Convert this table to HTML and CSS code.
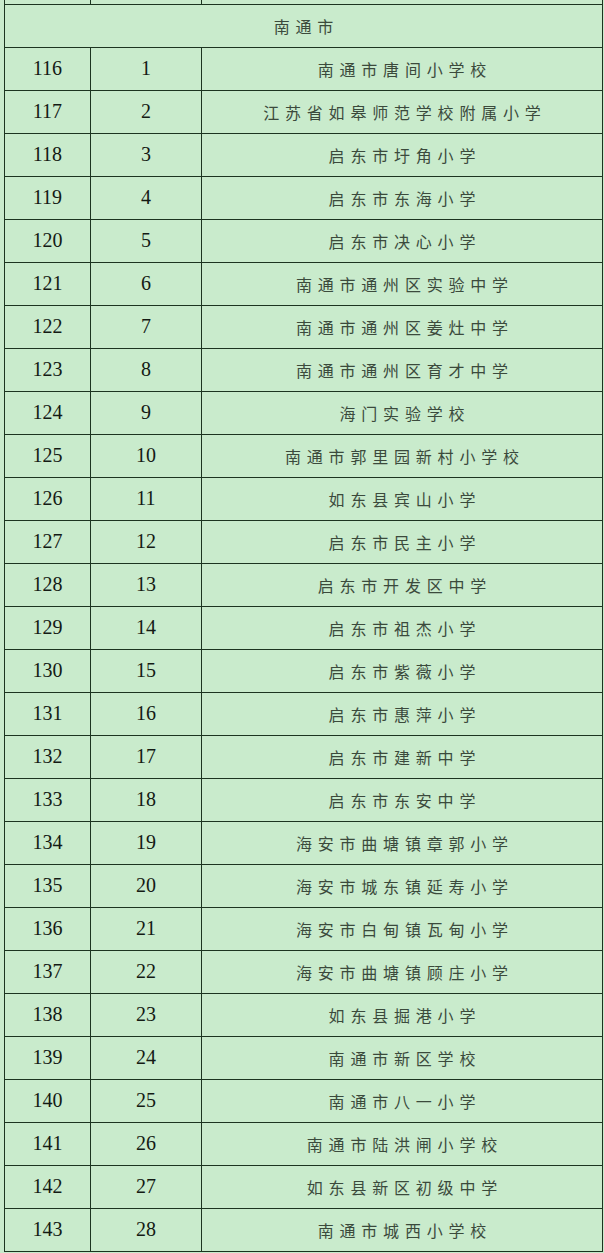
FILE: index.html
```html
<!DOCTYPE html>
<html lang="zh">
<head>
<meta charset="utf-8">
<title>南通市</title>
<link rel="stylesheet" href="styles.css">
</head>
<body>
<table class="list">
  <colgroup><col class="c1"><col class="c2"><col class="c3"></colgroup>
  <tr class="cut"><td></td><td></td><td></td></tr>
  <tr class="head"><td colspan="3" class="name">南通市</td></tr>
  <tr><td class="num">116</td><td class="num">1</td><td class="name">南通市唐间小学校</td></tr>
  <tr><td class="num">117</td><td class="num">2</td><td class="name">江苏省如皋师范学校附属小学</td></tr>
  <tr><td class="num">118</td><td class="num">3</td><td class="name">启东市圩角小学</td></tr>
  <tr><td class="num">119</td><td class="num">4</td><td class="name">启东市东海小学</td></tr>
  <tr><td class="num">120</td><td class="num">5</td><td class="name">启东市决心小学</td></tr>
  <tr><td class="num">121</td><td class="num">6</td><td class="name">南通市通州区实验中学</td></tr>
  <tr><td class="num">122</td><td class="num">7</td><td class="name">南通市通州区姜灶中学</td></tr>
  <tr><td class="num">123</td><td class="num">8</td><td class="name">南通市通州区育才中学</td></tr>
  <tr><td class="num">124</td><td class="num">9</td><td class="name">海门实验学校</td></tr>
  <tr><td class="num">125</td><td class="num">10</td><td class="name">南通市郭里园新村小学校</td></tr>
  <tr><td class="num">126</td><td class="num">11</td><td class="name">如东县宾山小学</td></tr>
  <tr><td class="num">127</td><td class="num">12</td><td class="name">启东市民主小学</td></tr>
  <tr><td class="num">128</td><td class="num">13</td><td class="name">启东市开发区中学</td></tr>
  <tr><td class="num">129</td><td class="num">14</td><td class="name">启东市祖杰小学</td></tr>
  <tr><td class="num">130</td><td class="num">15</td><td class="name">启东市紫薇小学</td></tr>
  <tr><td class="num">131</td><td class="num">16</td><td class="name">启东市惠萍小学</td></tr>
  <tr><td class="num">132</td><td class="num">17</td><td class="name">启东市建新中学</td></tr>
  <tr><td class="num">133</td><td class="num">18</td><td class="name">启东市东安中学</td></tr>
  <tr><td class="num">134</td><td class="num">19</td><td class="name">海安市曲塘镇章郭小学</td></tr>
  <tr><td class="num">135</td><td class="num">20</td><td class="name">海安市城东镇延寿小学</td></tr>
  <tr><td class="num">136</td><td class="num">21</td><td class="name">海安市白甸镇瓦甸小学</td></tr>
  <tr><td class="num">137</td><td class="num">22</td><td class="name">海安市曲塘镇顾庄小学</td></tr>
  <tr><td class="num">138</td><td class="num">23</td><td class="name">如东县掘港小学</td></tr>
  <tr><td class="num">139</td><td class="num">24</td><td class="name">南通市新区学校</td></tr>
  <tr><td class="num">140</td><td class="num">25</td><td class="name">南通市八一小学</td></tr>
  <tr><td class="num">141</td><td class="num">26</td><td class="name">南通市陆洪闸小学校</td></tr>
  <tr><td class="num">142</td><td class="num">27</td><td class="name">如东县新区初级中学</td></tr>
  <tr><td class="num">143</td><td class="num">28</td><td class="name">南通市城西小学校</td></tr>
</table>
</body>
</html>
```

FILE: styles.css
```css
html, body {
  margin: 0;
  padding: 0;
  background: #c9ebcc;
}
body {
  padding-left: 4px;
}
.list {
  border-collapse: collapse;
  table-layout: fixed;
  width: 598px;
  background: #c9ebcc;
}
.c1 { width: 86px; }
.c2 { width: 111px; }
.c3 { width: 401px; }
.list td {
  border: 1.5px solid #1c3420;
  padding: 0;
  text-align: center;
  vertical-align: middle;
}
.list tr {
  height: 43px;
}
.list tr.cut {
  height: 4px;
}
.list tr.cut td {
  border-top: none;
  height: 3px;
}
.num {
  font-family: "Liberation Serif", "Times New Roman", serif;
  font-size: 20px;
  color: #141a14;
}
.name {
  font-family: "Noto Sans CJK SC", sans-serif;
  font-size: 16px;
  letter-spacing: 5.8px;
  padding-left: 5.8px !important;
  color: #3b4a3c;
}
```
